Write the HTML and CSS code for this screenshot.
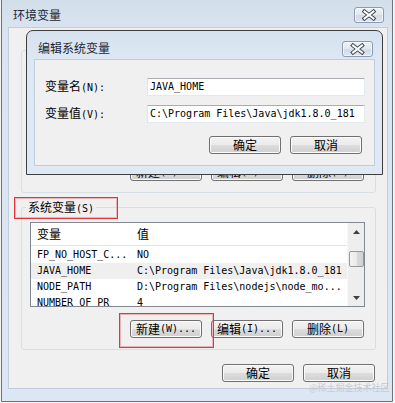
FILE: index.html
```html
<!DOCTYPE html>
<html lang="zh-CN">
<head>
<meta charset="utf-8">
<title>环境变量</title>
<link rel="stylesheet" href="styles.css">
</head>
<body>
<div class="win outer">
  <div class="titlebar">
    <span class="title">环境变量</span>
    <span class="close">
      <svg width="30" height="16" viewBox="0 0 30 16"><path d="M10.5 4.5 L19.5 11.5 M19.5 4.5 L10.5 11.5" stroke="#3b4656" stroke-width="4" stroke-linecap="square" fill="none"/><path d="M10.5 4.5 L19.5 11.5 M19.5 4.5 L10.5 11.5" stroke="#fff" stroke-width="2" stroke-linecap="square" fill="none"/></svg>
    </span>
  </div>
  <div class="client">
    <fieldset class="group">
      <legend class="empty"></legend>
      <div class="list">
        <div class="list-main">
          <div class="head"></div>
        </div>
        <div class="scroll"></div>
      </div>
      <div class="btnrow">
        <span class="btn">新建<span class="a">(W)...</span></span>
        <span class="btn">编辑<span class="a">(I)...</span></span>
        <span class="btn">删除<span class="a">(L)</span></span>
      </div>
    </fieldset>
    <fieldset class="group sys">
      <legend>系统变量<span class="a">(S)</span></legend>
      <div class="list">
        <div class="list-main">
          <div class="head"><span class="col1">变量</span><span class="col2">值</span></div>
          <div class="rows">
            <div class="row"><span class="col1">FP_NO_HOST_C...</span><span class="col2">NO</span></div>
            <div class="row sel"><span class="col1">JAVA_HOME</span><span class="col2">C:\Program Files\Java\jdk1.8.0_181</span></div>
            <div class="row"><span class="col1">NODE_PATH</span><span class="col2">D:\Program Files\nodejs\node_mo...</span></div>
            <div class="row"><span class="col1">NUMBER_OF_PR</span><span class="col2">4</span></div>
          </div>
        </div>
        <div class="scroll">
          <span class="arrow"><svg width="7" height="4" viewBox="0 0 7 4"><path d="M0 4 L3.5 0 L7 4 Z" fill="#404040"/></svg></span>
          <span class="thumb"></span>
          <span class="arrow down"><svg width="7" height="4" viewBox="0 0 7 4"><path d="M0 0 L3.5 4 L7 0 Z" fill="#404040"/></svg></span>
        </div>
      </div>
      <div class="btnrow">
        <span class="btn">新建<span class="a">(W)...</span></span>
        <span class="btn">编辑<span class="a">(I)...</span></span>
        <span class="btn">删除<span class="a">(L)</span></span>
      </div>
    </fieldset>
    <div class="dlgbtns">
      <span class="btn">确定</span>
      <span class="btn">取消</span>
    </div>
  </div>
</div>

<div class="win inner">
  <div class="titlebar">
    <span class="title">编辑系统变量</span>
    <span class="close">
      <svg width="31" height="16" viewBox="0 0 31 16"><path d="M11 4.5 L20 11.5 M20 4.5 L11 11.5" stroke="#3b4656" stroke-width="4" stroke-linecap="square" fill="none"/><path d="M11 4.5 L20 11.5 M20 4.5 L11 11.5" stroke="#fff" stroke-width="2" stroke-linecap="square" fill="none"/></svg>
    </span>
  </div>
  <div class="client">
    <div class="form">
      <label>变量名<span class="a">(N):</span></label>
      <span class="input">JAVA_HOME</span>
      <label>变量值<span class="a">(V):</span></label>
      <span class="input">C:\Program Files\Java\jdk1.8.0_181</span>
    </div>
    <div class="dlgbtns">
      <span class="btn">确定</span>
      <span class="btn">取消</span>
    </div>
  </div>
</div>

<div class="mark mark-group"></div>
<div class="mark mark-new"></div>
<div class="watermark">@稀土掘金技术社区</div>
</body>
</html>
```

FILE: styles.css
```css
* { box-sizing: border-box; }
html, body { margin: 0; padding: 0; }
body {
  width: 395px;
  height: 403px;
  overflow: hidden;
  position: relative;
  background: #f4f4f4;
  font-family: "Noto Sans CJK SC", "Noto Sans", sans-serif;
  font-size: 12px;
  color: #000;
}
.a {
  font-family: "DejaVu Sans Mono", monospace;
  font-size: 10px;
}

/* windows */
.win {
  position: absolute;
  display: flex;
  flex-direction: column;
}
.outer {
  left: 1px;
  top: -6px;
  width: 392px;
  height: 408px;
  border: 1px solid #6c737c;
  border-radius: 6px 6px 0 0;
  background: linear-gradient(#d2ddea, #dbe5f1 40px, #dde7f3);
  padding: 0 4px 12px 6px;
}
.inner {
  left: 26px;
  top: 30px;
  width: 357px;
  height: 145px;
  border: 1px solid #3e3e3e;
  border-radius: 7px 7px 0 0;
  background: linear-gradient(#d6e2ef, #dde8f4 30px, #dee9f5);
  padding: 0 7px 8px 7px;
}
.titlebar {
  display: flex;
  align-items: center;
  justify-content: space-between;
  flex: none;
}
.outer .titlebar { height: 32px; padding-top: 8px; }
.outer .title { margin-left: 5px; }
.outer .close { margin-right: 4px; width: 30px; }
.inner .titlebar { height: 28px; padding-top: 6px; }
.inner .title { margin-left: 4px; }
.inner .close { margin-right: 2px; margin-top: 2px; width: 31px; }
.title {
  color: #1f2633;
  font-size: 12px;
  line-height: 14px;
}
.close {
  height: 16px;
  display: block;
  border: 1px solid #8d9bb0;
  border-radius: 3px;
  background: linear-gradient(#eef3f9, #dfe7f1 50%, #d2dce9 51%, #dbe4ef);
  box-shadow: inset 0 0 0 1px rgba(255,255,255,0.6);
  overflow: hidden;
}
.close svg { display: block; margin: -1px 0 0 -1px; }

.client {
  flex: 1;
  background: #f0f0f0;
  border: 1px solid #bfcddd;
  display: flex;
  flex-direction: column;
}
.outer .client { padding: 15px 12px 0 12px; }
.inner .client { padding: 18px 9px 0 10px; }

/* group boxes */
.group {
  margin: 0;
  width: 355px;
  height: 150px;
  border: 1px solid #d5dfe5;
  border-radius: 3px;
  padding: 0 10px 11px 0;
  min-width: 0;
  flex: none;
}
.group legend {
  margin-left: 4px;
  padding: 0 2px;
  height: 14px;
  line-height: 14px;
}
.group legend.empty { width: 70px; }
.sys { margin-top: 7px; }

.list {
  margin: 8px 0 0 8px;
  width: 335px;
  height: 85px;
  border: 1px solid #828790;
  background: #fff;
  display: flex;
  overflow: hidden;
}
.list-main { flex: 1; overflow: hidden; }
.head {
  height: 23px;
  border-bottom: 1px solid #e3e3e3;
  display: flex;
  align-items: center;
  line-height: 14px;
}
.col1 { width: 106px; padding-left: 6px; flex: none; white-space: nowrap; }
.col2 { white-space: nowrap; }
.rows { padding-top: 1px; }
.row {
  display: flex;
  height: 16px;
  line-height: 16px;
  font-family: "DejaVu Sans Mono", monospace;
  font-size: 10px;
}
.row.sel { background: #efefef; }

.scroll {
  width: 17px;
  flex: none;
  background: #eeeeee;
  border-left: 1px solid #f7f7f7;
  display: flex;
  flex-direction: column;
  align-items: center;
}
.arrow {
  height: 17px;
  display: flex;
  align-items: center;
  justify-content: center;
}
.arrow svg { display: block; }
.arrow.down { margin-top: auto; }
.thumb {
  margin-top: 11px;
  width: 15px;
  height: 16px;
  border: 1px solid #979797;
  border-radius: 2px;
  background: linear-gradient(to right, #f4f4f4, #e9e9e9 50%, #d9d9d9 51%, #d2d2d2);
}

/* buttons */
.btnrow {
  display: flex;
  justify-content: flex-end;
  gap: 9px;
  margin-top: 13px;
  padding-right: 1px;
}
.dlgbtns {
  display: flex;
  justify-content: flex-end;
  gap: 9px;
  margin-top: 14px;
}
.inner .dlgbtns { margin-top: 13px; padding-right: 3px; }
.btn {
  width: 72px;
  height: 18px;
  border: 1px solid #707070;
  border-radius: 3px;
  background: linear-gradient(#f2f2f2, #ebebeb 50%, #dddddd 51%, #cfcfcf);
  box-shadow: inset 0 0 0 1px #fbfbfb;
  display: flex;
  align-items: center;
  justify-content: center;
  line-height: 14px;
  white-space: nowrap;
}

/* edit form */
.form {
  display: grid;
  grid-template-columns: 102px 218px;
  row-gap: 9px;
  align-items: center;
}
.form label { line-height: 14px; }
.input {
  height: 18px;
  background: #fff;
  border: 1px solid #e3e9ef;
  border-top-color: #abadb3;
  border-left-color: #e2e3ea;
  padding: 0 2px;
  font-family: "DejaVu Sans Mono", monospace;
  font-size: 10px;
  line-height: 16px;
  white-space: nowrap;
  overflow: hidden;
}

/* annotations */
.mark {
  position: absolute;
  border: 1px solid #e0373d;
  box-shadow: inset 0 0 0 1px rgba(230, 70, 76, 0.35);
  z-index: 5;
}
.mark-group { left: 14px; top: 197px; width: 104px; height: 22px; }
.mark-new { left: 119px; top: 313px; width: 95px; height: 35px; }
.watermark {
  position: absolute;
  left: 309px;
  top: 382px;
  font-size: 9px;
  line-height: 12px;
  color: #c6cbd2;
  white-space: nowrap;
}
```
